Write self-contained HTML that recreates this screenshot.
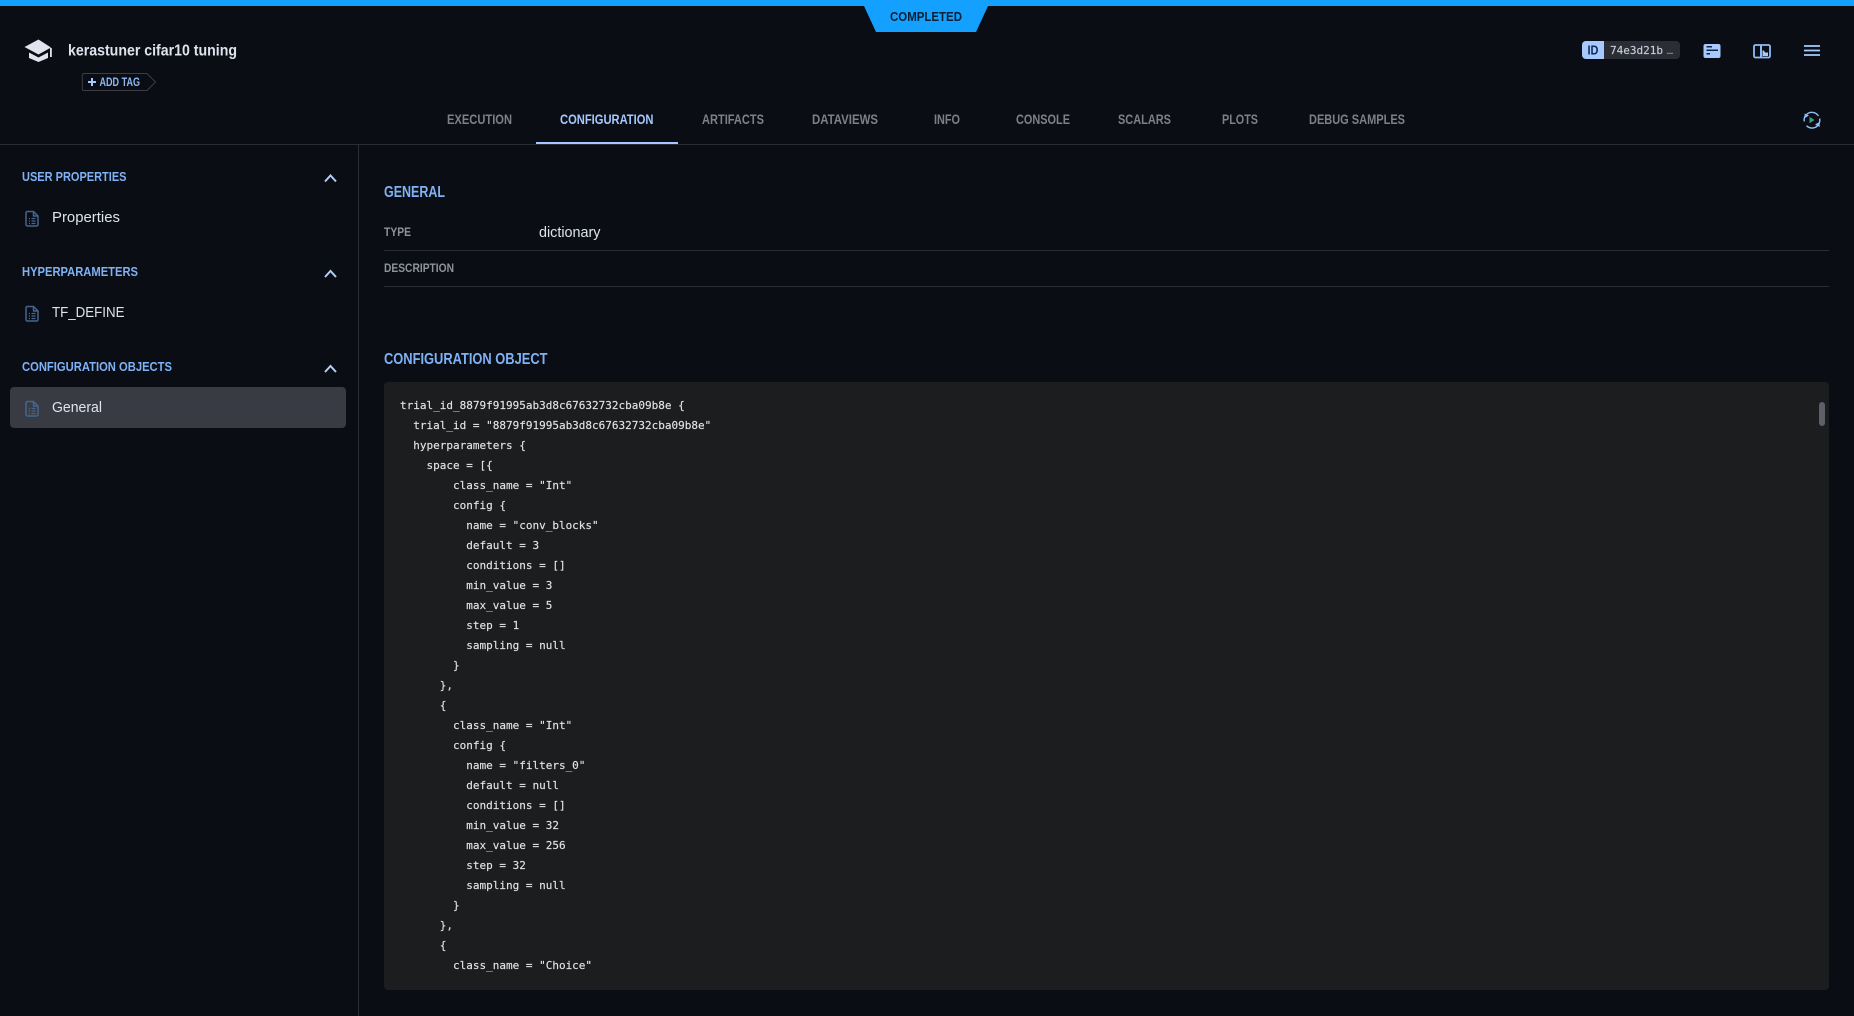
<!DOCTYPE html>
<html lang="en">
<head>
<meta charset="utf-8">
<title>kerastuner cifar10 tuning</title>
<style>
html,body{margin:0;padding:0;background:#0a0d14;width:1854px;height:1016px;overflow:hidden}
svg{display:block;position:absolute;left:0;top:0}
text{font-family:"Liberation Sans",sans-serif;white-space:pre}
.tab{font-size:13.5px;font-weight:700;fill:#7d8087}
.sec{font-size:13px;font-weight:700;fill:#7fb2f5}
.item{font-size:15px;fill:#dfe3ee}
.h{font-size:15.5px;font-weight:700;fill:#7fb2f5}
.lbl{font-size:12px;font-weight:700;fill:#8f939c}
.code{font-family:"DejaVu Sans Mono",monospace;font-size:11px;fill:#e2e2e2;stroke:#e2e2e2;stroke-width:.15px}
.chev{fill:none;stroke:#b4cff5;stroke-width:2}
.fi{fill:none;stroke:#46648f;stroke-width:1.5;stroke-linejoin:round}
.fl{stroke:#46648f;stroke-width:1.2;fill:none}
</style>
</head>
<body>
<svg width="1854" height="1016" viewBox="0 0 1854 1016" xmlns="http://www.w3.org/2000/svg">
<defs>
<g id="file">
<path class="fi" d="M1 3a1.500 1.500 0 0 1 1.500-1.500H8.500L13 6V14.500A1.500 1.500 0 0 1 11.500 16H2.500A1.500 1.500 0 0 1 1 14.500Z"/>
<path class="fi" d="M8.500 1.500V6H13"/>
<path class="fl" d="M3.800 8.500H5M6.500 8.500H10.500M3.800 11H5M6.500 11H10.500M3.800 13.500H5M6.500 13.500H10.500"/>
</g>
</defs>
<rect width="1854" height="1016" fill="#0a0d14"/>

<!-- top bar & badge -->
<rect width="1854" height="6" fill="#14a0ff"/>
<polygon points="864,6 988,6 976,32 876,32" fill="#14a0ff"/>
<text x="890" y="21" font-size="12.5" font-weight="700" textLength="72" lengthAdjust="spacingAndGlyphs" fill="#0a1f33">COMPLETED</text>

<!-- title -->
<path d="M38.500 39.500 24.500 47 38.500 54.500 51 47.500Z" fill="#e1e4ee"/>
<path d="M29 52.500V58L38.500 62 48 58V52.500L38.500 57.500Z" fill="#e1e4ee"/>
<rect x="50" y="48" width="1.800" height="9" fill="#e1e4ee"/>
<text x="68" y="55.300" font-size="16" font-weight="700" fill="#dfe3ee" textLength="169" lengthAdjust="spacingAndGlyphs">kerastuner cifar10 tuning</text>

<!-- add tag -->
<path d="M84 73.500H147L155.500 82 147 90.500H84A1.800 1.800 0 0 1 82.300 88.700V75.300A1.800 1.800 0 0 1 84 73.500Z" fill="none" stroke="#3b3e48" stroke-width="1"/>
<path d="M88 82H96M92 78V86" stroke="#a6c8ff" stroke-width="2" fill="none"/>
<text x="99.500" y="86" font-size="12" font-weight="700" fill="#8fb8f5" textLength="40.500" lengthAdjust="spacingAndGlyphs">ADD TAG</text>

<!-- id chip -->
<rect x="1582" y="41" width="98" height="18" rx="4" fill="#2a2d35"/>
<path d="M1586 41H1604V59H1586A4 4 0 0 1 1582 55V45A4 4 0 0 1 1586 41Z" fill="#a8c9ff"/>
<text x="1587.500" y="54.500" font-size="13" font-weight="700" fill="#0d2a52" textLength="11" lengthAdjust="spacingAndGlyphs">ID</text>
<text x="1610" y="54" class="code" style="fill:#c9cdd8;stroke:#c9cdd8">74e3d21b</text>
<text x="1665.500" y="54" class="code" style="fill:#c9cdd8;stroke:none;font-size:8px" textLength="9">...</text>

<!-- details icon -->
<rect x="1703.500" y="44" width="17" height="14" rx="2" fill="#a8c9ff"/>
<path d="M1706.500 46.800H1712M1706.500 50.300H1718M1706.500 53.800H1710" stroke="#10233f" stroke-width="1.500" fill="none"/>
<!-- layout icon -->
<rect x="1754" y="45" width="16" height="12.500" rx="1.500" fill="none" stroke="#8fbcf7" stroke-width="1.800"/>
<path d="M1761 45V57.500" stroke="#8fbcf7" stroke-width="2"/>
<path d="M1762.500 56V50.500H1764L1765 52.500H1768V56Z" fill="#a8c9ff"/>
<!-- hamburger -->
<path d="M1804 46H1820M1804 50.500H1820M1804 55H1820" stroke="#a8c9ff" stroke-width="1.700" fill="none"/>
<!-- refresh icon -->
<path d="M1806.500 114.500A7.800 7.800 0 0 1 1818.500 116" fill="none" stroke="#93bdf5" stroke-width="1.400"/>
<path d="M1804.300 121.500A7.800 7.800 0 0 1 1805.500 115.500" fill="none" stroke="#93bdf5" stroke-width="1.400"/>
<path d="M1804.500 113.500 1809 115.500 1805 118Z" fill="#93bdf5"/>
<path d="M1819.600 118.500A7.800 7.800 0 0 1 1806.500 125.800" fill="none" stroke="#93bdf5" stroke-width="1.400"/>
<path d="M1819.800 127 1815 124.500 1819.500 122Z" fill="#93bdf5"/>
<path d="M1809.500 116.800 1814.500 120 1809.500 123.200Z" fill="#3b9c8a"/>

<!-- tabs -->
<text class="tab" x="447" y="124" textLength="65" lengthAdjust="spacingAndGlyphs">EXECUTION</text>
<text class="tab" x="560" y="124" textLength="93.500" lengthAdjust="spacingAndGlyphs" style="fill:#a6c8ff">CONFIGURATION</text>
<text class="tab" x="702" y="124" textLength="62" lengthAdjust="spacingAndGlyphs">ARTIFACTS</text>
<text class="tab" x="812" y="124" textLength="66" lengthAdjust="spacingAndGlyphs">DATAVIEWS</text>
<text class="tab" x="934" y="124" textLength="26" lengthAdjust="spacingAndGlyphs">INFO</text>
<text class="tab" x="1016" y="124" textLength="54" lengthAdjust="spacingAndGlyphs">CONSOLE</text>
<text class="tab" x="1118" y="124" textLength="53" lengthAdjust="spacingAndGlyphs">SCALARS</text>
<text class="tab" x="1222" y="124" textLength="36" lengthAdjust="spacingAndGlyphs">PLOTS</text>
<text class="tab" x="1309" y="124" textLength="96" lengthAdjust="spacingAndGlyphs">DEBUG SAMPLES</text>
<rect x="0" y="144" width="1854" height="1" fill="#2a2d35"/>
<rect x="536" y="142" width="142" height="2" fill="#a6c8ff"/>
<rect x="358" y="144" width="1" height="872" fill="#2a2d35"/>

<!-- sidebar -->
<text class="sec" x="22" y="181" textLength="104.500" lengthAdjust="spacingAndGlyphs">USER PROPERTIES</text>
<path class="chev" d="M325 181.500 330.500 175.500 336 181.500"/>
<use href="#file" x="25" y="210"/>
<text class="item" x="52" y="222" textLength="68" lengthAdjust="spacingAndGlyphs">Properties</text>

<text class="sec" x="22" y="276" textLength="116" lengthAdjust="spacingAndGlyphs">HYPERPARAMETERS</text>
<path class="chev" d="M325 277 330.500 271 336 277"/>
<use href="#file" x="25" y="305"/>
<text class="item" x="52" y="317" textLength="72.500" lengthAdjust="spacingAndGlyphs">TF_DEFINE</text>

<text class="sec" x="22" y="371" textLength="150" lengthAdjust="spacingAndGlyphs">CONFIGURATION OBJECTS</text>
<path class="chev" d="M325 372 330.500 366 336 372"/>
<rect x="10" y="387" width="336" height="41" rx="4" fill="#383b43"/>
<use href="#file" x="25" y="400"/>
<text class="item" x="52" y="412" textLength="50" lengthAdjust="spacingAndGlyphs">General</text>

<!-- main -->
<text class="h" x="384" y="197" textLength="61" lengthAdjust="spacingAndGlyphs">GENERAL</text>
<text class="lbl" x="384" y="236" textLength="27" lengthAdjust="spacingAndGlyphs">TYPE</text>
<text class="item" x="539" y="237" textLength="61.500" lengthAdjust="spacingAndGlyphs">dictionary</text>
<rect x="384" y="250" width="1445" height="1" fill="#2a2d35"/>
<text class="lbl" x="384" y="272" textLength="70" lengthAdjust="spacingAndGlyphs">DESCRIPTION</text>
<rect x="384" y="286" width="1445" height="1" fill="#2a2d35"/>
<text class="h" x="384" y="364" textLength="163.500" lengthAdjust="spacingAndGlyphs">CONFIGURATION OBJECT</text>

<!-- code panel -->
<rect x="384" y="382" width="1445" height="608" rx="4" fill="#1c1d1f"/>
<rect x="1819" y="402" width="6" height="24" rx="3" fill="#5e5f69"/>
<g class="code">
<text class="code" x="400" y="409">trial_id_8879f91995ab3d8c67632732cba09b8e {</text>
<text class="code" x="400" y="429">  trial_id = "8879f91995ab3d8c67632732cba09b8e"</text>
<text class="code" x="400" y="449">  hyperparameters {</text>
<text class="code" x="400" y="469">    space = [{</text>
<text class="code" x="400" y="489">        class_name = "Int"</text>
<text class="code" x="400" y="509">        config {</text>
<text class="code" x="400" y="529">          name = "conv_blocks"</text>
<text class="code" x="400" y="549">          default = 3</text>
<text class="code" x="400" y="569">          conditions = []</text>
<text class="code" x="400" y="589">          min_value = 3</text>
<text class="code" x="400" y="609">          max_value = 5</text>
<text class="code" x="400" y="629">          step = 1</text>
<text class="code" x="400" y="649">          sampling = null</text>
<text class="code" x="400" y="669">        }</text>
<text class="code" x="400" y="689">      },</text>
<text class="code" x="400" y="709">      {</text>
<text class="code" x="400" y="729">        class_name = "Int"</text>
<text class="code" x="400" y="749">        config {</text>
<text class="code" x="400" y="769">          name = "filters_0"</text>
<text class="code" x="400" y="789">          default = null</text>
<text class="code" x="400" y="809">          conditions = []</text>
<text class="code" x="400" y="829">          min_value = 32</text>
<text class="code" x="400" y="849">          max_value = 256</text>
<text class="code" x="400" y="869">          step = 32</text>
<text class="code" x="400" y="889">          sampling = null</text>
<text class="code" x="400" y="909">        }</text>
<text class="code" x="400" y="929">      },</text>
<text class="code" x="400" y="949">      {</text>
<text class="code" x="400" y="969">        class_name = "Choice"</text>
</g>
</svg>
</body>
</html>
